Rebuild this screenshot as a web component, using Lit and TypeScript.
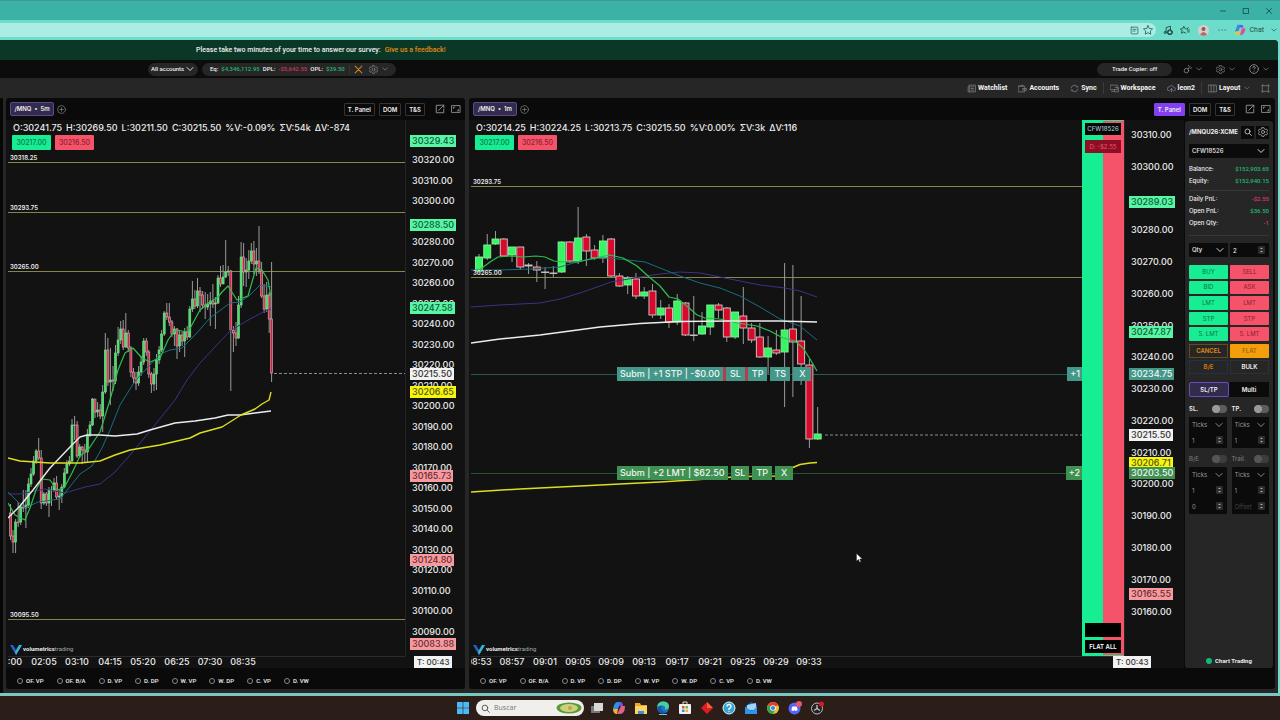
import { LitElement, html, svg, css } from "lit";
import { customElement, property } from "lit/decorators.js";

type Candle = [x: number, open: number, close: number, high: number, low: number];
type Mark = { price: number; text: string; tone: string };
type Order = { y: number; tone: string; qty: string; parts: string[]; ghost?: boolean };
interface ChartSpec {
  symbol: string;
  stats: string[];
  x0: number;
  width: number;
  refPrice: number;
  refY: number;
  perPoint: number;
  ticks: number[];
  marks: Mark[];
  levels: { price: string; y: number }[];
  times: { x: number; text: string }[];
  lines: { color: string; w: number; pts: string }[];
  candles: Candle[];
  bar: number;
  up: string;
  down: string;
  edge: string;
  last: { x: number; y: number };
}

const TOP = 120;
const HEIGHT = 536;

/* Closing values of the five minute bars: x, close, high, low. */
const FIVE: number[][] = [
  [10.5, 536, 504, 540], [13, 542, 530, 553], [15.6, 522, 519, 553], [18.2, 522, 502, 527], [20.7, 507, 505, 525], [23.3, 508, 490, 512],
  [25.9, 505, 490, 528], [28.4, 484, 478, 508], [31, 474, 468, 487], [33.6, 461, 456, 476], [36.1, 451, 449, 464],
  [38.7, 458, 438, 460], [41.2, 503, 450, 509], [43.8, 494, 492, 505], [46.4, 503, 492, 506], [49, 490, 487, 517],
  [51.5, 490, 486, 506], [54, 483, 478, 492], [56.6, 497, 476, 500], [59.2, 496, 490, 510], [61.8, 487, 484, 503],
  [64.3, 473, 468, 488], [66.9, 464, 460, 474], [69.4, 461, 456, 466], [72, 425, 419, 463], [74.6, 425, 416, 440],
  [77.1, 456, 421, 458], [79.7, 447, 444, 458], [82.2, 450, 446, 464], [84.8, 452, 444, 463], [87.4, 435, 429, 462],
  [90, 425, 421, 437], [92.5, 399, 398, 426], [95, 412, 399, 418], [97.6, 410, 402, 417], [100.2, 416, 404, 419],
  [102.7, 392, 385, 432], [105.3, 350, 333, 394], [107.9, 382, 338, 386], [110.4, 380, 348, 405], [113, 381, 366, 391],
  [115.5, 353, 345, 384], [118.1, 340, 327, 356], [120.7, 329, 321, 344], [123.2, 347, 320, 350], [125.8, 333, 313, 348],
  [128.3, 348, 330, 352], [130.9, 372, 346, 377], [133.5, 378, 368, 384], [136, 383, 372, 390], [138.6, 372, 366, 386],
  [141.1, 362, 356, 376], [143.7, 341, 338, 365], [146.3, 352, 338, 356], [148.8, 374, 350, 378], [151.4, 384, 372, 393],
  [154, 374, 368, 391], [156.5, 360, 354, 390], [159.1, 350, 346, 364], [161.6, 334, 330, 352], [164.2, 313, 311, 336],
  [166.8, 317, 303, 320], [169.3, 322, 303, 326], [171.9, 334, 320, 337], [174.4, 329, 326, 346], [177, 346, 328, 359],
  [179.6, 335, 330, 352], [182.1, 341, 332, 346], [184.7, 332, 328, 357], [187.2, 337, 326, 340], [189.8, 309, 306, 338],
  [192.4, 299, 281, 312], [194.9, 306, 290, 309], [197.5, 291, 278, 308], [200, 295, 287, 312], [202.6, 305, 291, 309],
  [205.2, 307, 292, 319], [207.7, 304, 294, 310], [210.3, 301, 292, 326], [212.9, 304, 284, 308], [215.4, 303, 297, 329],
  [218, 278, 275, 304], [220.5, 284, 266, 287], [223.1, 277, 265, 284], [225.7, 272, 240, 278], [228.2, 271, 266, 276],
  [230.8, 330, 270, 391], [233.4, 333, 326, 352], [236, 338, 322, 346], [238.5, 305, 296, 339], [241.1, 257, 242, 308],
  [243.6, 272, 243, 286], [246.2, 270, 258, 287], [248.8, 261, 250, 279], [251.3, 251, 243, 264], [253.9, 264, 241, 274],
  [256.4, 261, 248, 276], [259, 271, 226, 274], [261.6, 296, 262, 298], [264.1, 309, 284, 313], [266.7, 295, 282, 312],
  [269.2, 319, 292, 333], [271.6, 373, 262, 382],
];

const fiveMinute: Candle[] = FIVE.map(([x, c, h, l], i) => [x, i ? FIVE[i - 1][1] : 513, c, h, l]);

/* One minute bars: open, close, high, low, spaced evenly. */
const ONE: number[][] = [
  [271, 257, 254, 273], [258, 245, 234, 260], [244, 239, 231, 245], [239, 256, 238, 256], [255, 247, 247, 262],
  [247, 267, 247, 270], [265, 266, 263, 274], [267, 270, 261, 282], [272, 272, 267, 289], [273, 273, 266, 277],
  [272, 242, 241, 273], [242, 261, 241, 263], [261, 238, 207, 264], [237, 251, 234, 266], [250, 258, 245, 260],
  [258, 241, 235, 263], [239, 276, 238, 277], [276, 286, 273, 287], [285, 278, 276, 294], [279, 296, 273, 299],
  [296, 292, 287, 299], [291, 315, 284, 318], [315, 308, 300, 319], [308, 322, 304, 328], [322, 301, 294, 325],
  [303, 335, 302, 336], [335, 335, 296, 341], [334, 326, 312, 335], [327, 305, 305, 335], [305, 310, 303, 318],
  [308, 337, 307, 342], [337, 312, 312, 339], [316, 328, 287, 344], [328, 340, 323, 343], [337, 357, 323, 358],
  [357, 348, 336, 374], [350, 353, 330, 355], [352, 330, 263, 407], [329, 342, 265, 397], [341, 364, 296, 385],
  [365, 439, 359, 448], [439, 434, 407, 440],
];
const oneMinute: Candle[] = ONE.map(([o, c, h, l], i) => [479 + i * 8.26, o, c, h, l]);

const range = (from: number, to: number) =>
  Array.from({ length: (from - to) / 10 + 1 }, (_, i) => from - i * 10);

const left: ChartSpec = {
  symbol: "/MNQ  •  5m",
  stats: ["O:30241.75", "H:30269.50", "L:30211.50", "C:30215.50", "%V:-0.09%", "ΣV:54k", "ΔV:-874"],
  x0: 8,
  width: 397,
  refPrice: 30320,
  refY: 160,
  perPoint: 2.05,
  ticks: range(30320, 30090).filter((p) => p !== 30290),
  marks: [
    { price: 30329.43, text: "30329.43", tone: "mint" },
    { price: 30288.5, text: "30288.50", tone: "mint" },
    { price: 30247.58, text: "30247.58", tone: "mint" },
    { price: 30215.5, text: "30215.50", tone: "white" },
    { price: 30206.65, text: "30206.65", tone: "yellow" },
    { price: 30165.73, text: "30165.73", tone: "rose" },
    { price: 30124.8, text: "30124.80", tone: "rose" },
    { price: 30083.88, text: "30083.88", tone: "rose" },
  ],
  levels: [
    { price: "30318.25", y: 162.5 },
    { price: "30293.75", y: 212.5 },
    { price: "30265.00", y: 271.5 },
    { price: "30095.50", y: 619.5 },
  ],
  times: [
    { x: 15, text: ":00" }, { x: 44, text: "02:05" }, { x: 77, text: "03:10" }, { x: 110, text: "04:15" },
    { x: 143, text: "05:20" }, { x: 177, text: "06:25" }, { x: 210, text: "07:30" }, { x: 243, text: "08:35" },
  ],
  lines: [
    { color: "#3a3388", w: 1, pts: "8,494 20,494 45,489 65,493 85,487 100,484 115,472 130,455 150,431 175,400 187,380 200,363 215,347 230,331 250,319 265,311 271,309" },
    { color: "#16707f", w: 1, pts: "8,492 18,502 25,508 38,502 60,499 72,484 80,474 92,466 102,448 110,430 120,405 135,381 150,365 160,354 170,350 182,348 195,335 210,318 222,309 230,303 240,302 250,295 260,285 271,287" },
    { color: "#2fbf4b", w: 1.2, pts: "8,503 15,515 25,520 30,508 36,490 42,479 50,480 57,490 64,488 72,473 80,456 88,450 100,432 110,400 118,370 125,353 133,348 142,358 150,362 160,358 168,340 175,330 188,332 200,310 208,303 217,298 222,292 228,286 237,300 248,296 256,268 262,270 268,280 271,297" },
    { color: "#ececec", w: 1.4, pts: "8,518 20,506 33,490 50,468 70,447 80,437 87,435 100,435 115,436 137,434 150,430 175,423 195,421 215,418 228,415 240,415 255,413 271,411" },
    { color: "#dede20", w: 1.4, pts: "8,458 20,461 50,463 80,463 100,461 115,455 130,450 160,445 190,438 200,433 222,427 230,422 241,415 255,409 262,404 269,400 271,392" },
  ],
  candles: fiveMinute,
  bar: 2,
  up: "#3ee565",
  down: "#d81f3f",
  edge: "#cfb9ba",
  last: { x: 274, y: 373.5 },
};

const right: ChartSpec = {
  symbol: "/MNQ  •  1m",
  stats: ["O:30214.25", "H:30224.25", "L:30213.75", "C:30215.50", "%V:0.00%", "ΣV:3k", "ΔV:116"],
  x0: 471,
  width: 611,
  refPrice: 30310,
  refY: 135,
  perPoint: 3.177,
  ticks: range(30310, 30160).filter((p) => p !== 30290),
  marks: [
    { price: 30289.03, text: "30289.03", tone: "mint" },
    { price: 30247.87, text: "30247.87", tone: "mint" },
    { price: 30234.75, text: "30234.75", tone: "teal" },
    { price: 30215.5, text: "30215.50", tone: "white" },
    { price: 30206.71, text: "30206.71", tone: "yellow" },
    { price: 30203.5, text: "30203.50", tone: "green" },
    { price: 30165.55, text: "30165.55", tone: "rose" },
  ],
  levels: [
    { price: "30293.75", y: 186.5 },
    { price: "30265.00", y: 277.5 },
  ],
  times: ["08:53", "08:57", "09:01", "09:05", "09:09", "09:13", "09:17", "09:21", "09:25", "09:29", "09:33"].map(
    (text, i) => ({ x: 479 + i * 33, text })
  ),
  lines: [
    { color: "#3a3388", w: 1, pts: "471,307 500,305 540,303 560,299 580,293 600,286 611,282 640,277 660,274 680,272 700,273 730,279 760,285 785,288 800,291 817,297" },
    { color: "#16707f", w: 1, pts: "471,270 500,270 530,269 560,267 580,261 600,258 610,258 645,262 660,268 680,276 700,283 720,288 740,296 760,307 780,319 800,326 817,340" },
    { color: "#2fbf4b", w: 1.2, pts: "478,271 490,262 498,257 510,256 523,257 536,256 545,257 554,261 565,262 578,262 590,259 600,257 610,255 623,258 637,266 648,276 660,286 669,297 678,299 688,307 697,315 705,318 720,319 737,323 757,326 770,331 783,338 795,341 803,348 810,359 817,371" },
    { color: "#ececec", w: 1.5, pts: "471,343 500,339 540,335 570,331 600,327 640,323.5 680,321.5 730,321 780,321 817,322" },
    { color: "#dede20", w: 1.5, pts: "471,492 520,489 560,487 610,484.5 660,482 700,479.5 740,476.5 775,476 787,470 800,464.5 810,463 817,462.5" },
  ],
  candles: oneMinute,
  bar: 7,
  up: "#35f560",
  down: "#d80a2c",
  edge: "#cfcfcf",
  last: { x: 825, y: 435 },
};

const orders: Order[] = [
  { y: 374, tone: "teal", qty: "+1", parts: ["Subm | +1 STP | -$0.00", "SL", "TP", "TS", "X"], ghost: true },
  { y: 473, tone: "green", qty: "+2", parts: ["Subm | +2 LMT | $62.50", "SL", "TP", "X"] },
];

const profiles = ["OF. VP", "OF. B/A", "D. VP", "D. DP", "W. VP", "W. DP", "C. VP", "D. VW"];

const icon = (body: unknown, size = 10, w = 1.2) => html`<svg
  class="icon" width=${size} height=${size} viewBox="0 0 16 16" fill="none" stroke="currentColor"
  stroke-width=${w * 1.2} stroke-linecap="round" stroke-linejoin="round" aria-hidden="true">${body}</svg>`;

const chevron = (size = 8) => icon(svg`<path d="M2 5l6 6 6-6"/>`, size, 1.5);
const gear = (size = 10) => icon(svg`<path d="M6.500 1h3l.7 2 1.600.9 2.100-.5 1.500 2.600-1.400 1.500v1l1.400 1.500-1.500 2.600-2.100-.5-1.600.9-.7 2h-3l-.7-2-1.600-.9-2.100.5L.6 10l1.400-1.500v-1L.6 6l1.500-2.600 2.100.5L5.800 3z"/><circle cx="8" cy="8" r="2.500"/>`, size, 1);
const plus = icon(svg`<circle cx="8" cy="8" r="7"/><path d="M8 5v6M5 8h6"/>`, 9, 1);
const popout = icon(svg`<path d="M9 2H2v12h12V8M6 10l8-8M10.500 1.800H14.200V5.500"/>`, 10, 1.2);
const expand = icon(svg`<rect x="1.500" y="2.500" width="13" height="11"/><path d="M4 7V5h2M12 9v2h-2"/>`, 10, 1.1);
const stepper = html`<svg class="stepper" width="7" height="8" viewBox="0 0 7 8" aria-hidden="true"><rect width="7" height="8" rx="1" fill="#2c2c2c"/><path d="M2 3l1.500-1.500L5 3zM2 5l1.500 1.500L5 5z" fill="#aaa"/></svg>`;

const shared = css`
  * { box-sizing: border-box; }
  button, input, select { font: inherit; color: inherit; margin: 0; padding: 0; border: 0; background: none; min-width: 0; }
  button { flex: none; white-space: nowrap; }
  select { appearance: none; }
  input[type="number"] { appearance: textfield; }
  input::-webkit-inner-spin-button { display: none; }
  .icon { display: block; flex: none; }
`;

@customElement("trade-chart")
class TradeChart extends LitElement {
  @property({ attribute: false }) spec!: ChartSpec;
  @property({ type: Boolean }) trading = false;

  static styles = [shared, css`
    :host { display: grid; grid-template-columns: minmax(0, 1fr) auto 60px; grid-template-rows: minmax(0, 1fr) 12px; min-width: 0; min-height: 0; background: #121212; font-family: Inter, "Liberation Sans", sans-serif; color: #ececec; padding-left: 2px; }
    .plot { grid-column: 1; grid-row: 1; position: relative; overflow: hidden; min-width: 0; }
    .canvas { position: absolute; inset: 0; width: 100%; height: 100%; }
    .info { position: absolute; top: 1px; left: 4px; display: flex; flex-direction: column; gap: 1px; }
    .stats { display: flex; gap: 4px; padding-left: 1px; font-size: 9px; line-height: 13px; font-weight: 500; white-space: nowrap; }
    .quotes { display: flex; gap: 4px; }
    .quote { width: 39px; height: 15px; font-size: 7px; line-height: 15px; border-radius: 1px; text-align: center; }
    .bid { background: #17ed92; color: #0a7a4c; }
    .ask { background: #f4536a; color: #8c2232; }
    .level { position: absolute; left: 2px; font-size: 6px; line-height: 8px; font-weight: 600; transform: translateY(-100%); }
    .order { position: absolute; left: 23.9%; display: flex; gap: 3px; font-size: 9px; font-weight: 500; line-height: 14px; transform: translateY(-50%); white-space: nowrap; }
    .chip { height: 14px; padding: 0 3px; color: #f1f6f4; }
    .small { padding: 0 4px; }
    .small:last-child { padding: 0 6px; }
    .ghost .small { box-shadow: -3px 0 #b53b50, 3px 0 #b53b50; }
    .ghost .small ~ .small { box-shadow: none; }
    .qty { position: absolute; right: 0; font-size: 9px; font-weight: 500; line-height: 14px; padding: 0 2px 0 3px; transform: translateY(-50%); }
    .teal { background: #43988a; color: #f1f6f4; }
    .green { background: #3e9150; color: #f1f6f4; }
    .mint { background: #58f5a4; color: #0c5a38; }
    .white { background: #f2f2f2; color: #333; }
    .yellow { background: #f6f612; color: #55550a; }
    .rose { background: #f69a9f; color: #6b2a30; }
    .brand { position: absolute; left: 2px; bottom: 1px; display: flex; align-items: center; gap: 1px; font: 6px/12px Roboto, sans-serif; color: #9aa; }
    .brand b { color: #e4e8ee; }
    .cursor { position: absolute; left: 63%; top: 80.8%; }
    .ladder { grid-column: 2; grid-row: 1; width: 42px; display: flex; flex-direction: column; gap: 3px; padding: 2px; border: 1px solid #17ed92; border-right-color: #f4536a; background: linear-gradient(90deg, #17ed92 50%, #f4536a 50%); font-size: 6px; font-weight: 600; text-align: center; }
    .acct, .pnl { height: 12px; line-height: 12px; background: #050505; color: #a9c4d4; }
    .acct { font-weight: 500; }
    .pnl { background: #8d0f26; color: #f4536a; font-weight: 400; margin-top: 2px; height: 13px; line-height: 13px; }
    .blank { height: 14px; background: #000; margin-top: auto; }
    .flat { height: 13px; background: #000; color: #fff; }
    .axis { position: relative; grid-column: 3; grid-row: 1; font-size: 9px; border-left: 1px solid #242424; overflow: hidden; }
    .tick, .mark { position: absolute; left: 4px; line-height: 12px; transform: translateY(-50%); padding: 0 2px; white-space: nowrap; }
    .tick { font-weight: 500; }
    .times { position: relative; grid-column: 1 / 3; font-size: 9px; font-weight: 500; line-height: 9px; overflow: hidden; border-top: 1px solid #2b2b2b; }
    .time { position: absolute; transform: translateX(-50%); }
    .corner { grid-column: 3; display: flex; padding-left: 9px; font-size: 8px; line-height: 12px; }
    .timer { background: #f2f2f2; color: #333; padding: 0 3px; white-space: nowrap; }
    :host([trading]) .corner { padding: 0; margin-left: -11px; z-index: 1; }
  `];

  private pct(y: number) { return `top:${((y - TOP) / HEIGHT) * 100}%`; }
  private at(price: number) { return this.pct(this.spec.refY + (this.spec.refPrice - price) * this.spec.perPoint); }

  render() {
    const s = this.spec;
    const end = s.x0 + s.width;
    return html`
      <div class="plot">
        <svg class="canvas" viewBox="${s.x0} ${TOP} ${s.width} ${HEIGHT}" preserveAspectRatio="none" fill="none">
          ${s.levels.map((l) => svg`<path d="M${s.x0} ${l.y}H${end}" stroke="#85854c"/>`)}
          ${this.trading ? orders.map((o) => svg`<path d="M${s.x0} ${o.y + 0.5}H${end}" stroke=${o.tone === "teal" ? "#28584f" : "#25552f"}/>`) : ""}
          ${s.candles.map(([x, o, c, h, l]) => {
            const up = c < o;
            const doji = Math.abs(c - o) < 1;
            return svg`<path d="M${x} ${h}V${l}" stroke="#9b9b9b"/>
              <rect x=${x - s.bar / 2} y=${Math.min(o, c)} width=${s.bar} height=${doji ? 0.5 : Math.abs(c - o)}
                fill=${up ? s.up : s.down} stroke=${up && s.bar > 4 ? "#8af0a0" : up ? "#8fd79a" : s.edge} stroke-width=${s.bar > 4 ? 0.9 : 0.6}/>`;
          })}
          ${s.lines.map((l) => svg`<polyline points=${l.pts} stroke=${l.color} stroke-width=${l.w} stroke-linejoin="round"/>`)}
          <path d="M${s.last.x} ${s.last.y}H${end}" stroke="#8a8a8a" stroke-dasharray="3 2"/>
        </svg>
        <div class="info">
          <div class="stats">${s.stats.map((t) => html`<span>${t}</span>`)}</div>
          <div class="quotes"><button class="quote bid">30217.00</button><button class="quote ask">30216.50</button></div>
        </div>
        ${s.levels.map((l) => html`<span class="level" style=${this.pct(l.y - 1)}>${l.price}</span>`)}
        ${this.trading ? orders.map((o) => html`
          <div class="order ${o.ghost ? "ghost" : ""}" style=${this.pct(o.y)}>
            ${o.parts.map((p, i) => i === 0 ? html`<span class="chip ${o.tone}">${p}</span>` : html`<button class="chip small ${o.tone}">${p}</button>`)}
          </div>
          <span class="qty ${o.tone}" style=${this.pct(o.y)}>${o.qty}</span>`) : ""}
        <div class="brand">
          <svg width="12" height="11" viewBox="0 0 12 11"><path d="M0 1h3l3 5 3-5h3L6 11z" fill="#2463c9"/><path d="M9 1h3L6 11 5 8z" fill="#35b6c9"/></svg>
          <span><b>volumetrics</b>trading</span>
        </div>
        ${this.trading ? html`<svg class="cursor" width="7" height="10" viewBox="0 0 7 10"><path d="M.5.500v7.500l2-1.500 1.200 2.800 1.200-.5-1.200-2.700h2.600z" fill="#fff" stroke="#222" stroke-width=".4"/></svg>` : ""}
      </div>
      ${this.trading ? html`<div class="ladder">
        <div class="acct">CFW18526</div><div class="pnl">D: -$2.55</div>
        <div class="blank"></div><button class="flat">FLAT ALL</button>
      </div>` : ""}
      <div class="axis">
        ${s.ticks.map((p) => html`<span class="tick" style=${this.at(p)}>${p.toFixed(2)}</span>`)}
        ${s.marks.map((m) => html`<span class="mark ${m.tone}" style=${this.at(m.price)}>${m.text}</span>`)}
      </div>
      <div class="times">${s.times.map((t) => html`<span class="time" style="left:${((t.x - s.x0) / (s.width + (this.trading ? 42 : 0))) * 100}%">${t.text}</span>`)}</div>
      <div class="corner"><span class="timer">T: 00:43</span></div>`;
  }
}

@customElement("order-panel")
class OrderPanel extends LitElement {
  static styles = [shared, css`
    :host { display: flex; flex-direction: column; background: #262626; color: #eee; border-radius: 3px; padding: 4px 4px 0; font: 500 6px/12px Inter, "Liberation Sans", sans-serif; margin-top: 1px; min-width: 0; }
    .head { display: flex; align-items: center; gap: 2px; height: 14px; }
    .name { flex: 1; white-space: nowrap; font-weight: 700; }
    .tool { width: 13px; height: 13px; background: #0a0a0a; display: grid; place-items: center; color: #bbb; flex: none; }
    .field { position: relative; display: flex; align-items: center; background: #0b0b0b; height: 14px; border-radius: 1px; min-width: 0; }
    .field select, .field input { flex: 1; width: 100%; height: 100%; padding-left: 3px; outline: 0; }
    .field .icon { position: absolute; right: 4px; pointer-events: none; }
    .stepper { position: absolute; right: 4px; pointer-events: none; }
    .account { margin-top: 5px; }
    .facts { display: flex; flex-direction: column; margin: 5px 0 0; padding-bottom: 3px; border-bottom: 1px solid #383838; }
    .facts.last { margin-top: 2px; padding-bottom: 6px; }
    .fact { display: flex; justify-content: space-between; }
    .gain, .loss { font-family: Roboto, sans-serif; }
    .gain { color: #20b872; }
    .loss { color: #d83a60; }
    .pair { display: grid; grid-template-columns: 1fr 1fr; gap: 2px; }
    .size { margin-top: 7px; }
    .trade { height: 76px; grid-auto-rows: 1fr; margin-top: 8px; }
    .buy, .sell { border-radius: 1px; font-weight: 400; }
    .buy { background: #17ed92; color: #0b7448; }
    .sell { background: #f4536a; color: #8c2030; }
    .exit { margin-top: 3px; grid-auto-rows: 14px; }
    .cancel { border: 1px solid #6a4818; color: #e08a1c; font-weight: 600; }
    .flatten { background: #f59e0b; color: #94600a; border-radius: 1px; }
    .even { border: 1px solid #1d3346; color: #d07b1c; font-weight: 600; }
    .bulk { border: 1px solid #303030; font-weight: 600; }
    .mode { margin-top: 8px; grid-auto-rows: 15px; gap: 0; font-weight: 600; }
    .on { background: #322b4c; border: 1px solid #6a4bc0; border-radius: 2px; }
    .off { background: #0b0b0b; }
    .brackets { display: grid; grid-template-columns: 1fr 1fr; column-gap: 5px; margin-top: 6px; }
    .dim { color: #777; margin-top: 5px; }
    .toggle { display: flex; align-items: center; justify-content: space-between; height: 12px; font-weight: 600; }
    .dim .toggle { font-weight: 500; }
    .toggle input { appearance: none; width: 15px; height: 8px; border-radius: 4px; background: radial-gradient(circle at 4px 4px, #999 4px, #5c5c5c 4px); }
    .dim .toggle input { background: radial-gradient(circle at 4px 4px, #555 4px, #3c3c3c 4px); }
    .box { background: #0b0b0b; border-radius: 1px; margin-top: 2px; color: #999; font-weight: 400; }
    .box .field { height: 15px; }
    .box .field + .field { height: 16px; }
    .box ::placeholder { color: #444; }
    .status { margin-top: auto; height: 14px; display: flex; justify-content: center; align-items: center; gap: 3px; font: 700 6px/12px Roboto, sans-serif; }
    .dot { width: 6px; height: 6px; border-radius: 50%; background: #16b775; }
  `];

  private select(label: string, text: string) {
    return html`<label class="field"><select aria-label=${label}><option>${text}</option></select>${chevron(8)}</label>`;
  }
  private number(label: string, value: string, placeholder = "") {
    return html`<label class="field"><input type="number" aria-label=${label} .value=${value} placeholder=${placeholder} />${stepper}</label>`;
  }
  private bracket(name: string, rows: [string, string][]) {
    return html`<div>
      <label class="toggle">${name}<input type="checkbox" /></label>
      <div class="box">${this.select(`${name} unit`, "Ticks")}${rows.map(([v, p]) => this.number(`${name} value`, v, p))}</div>
    </div>`;
  }

  render() {
    return html`
      <div class="head"><span class="name">/MNQU26:XCME</span>
        <button class="tool" aria-label="Search">${icon(svg`<circle cx="7" cy="7" r="5"/><path d="M11 11l4 4"/>`, 8, 1.6)}</button>
        <button class="tool" aria-label="Settings">${gear(10)}</button></div>
      <label class="field account"><select aria-label="Account"><option>CFW18526</option></select>${chevron(8)}</label>
      <div class="facts">
        <div class="fact"><span>Balance:</span><span class="gain">$152,903.65</span></div>
        <div class="fact"><span>Equity:</span><span class="gain">$152,940.15</span></div>
      </div>
      <div class="facts last">
        <div class="fact"><span>Daily PnL:</span><span class="loss">-$2.55</span></div>
        <div class="fact"><span>Open PnL:</span><span class="gain">$36.50</span></div>
        <div class="fact"><span>Open Qty:</span><span class="loss">-1</span></div>
      </div>
      <div class="pair size">${this.select("Quantity type", "Qty")}${this.number("Quantity", "2")}</div>
      <div class="pair trade">
        ${[["BUY", "SELL"], ["BID", "ASK"], ["LMT", "LMT"], ["STP", "STP"], ["S. LMT", "S. LMT"]].map(
          ([b, s]) => html`<button class="buy">${b}</button><button class="sell">${s}</button>`
        )}
      </div>
      <div class="pair exit">
        <button class="cancel">CANCEL</button><button class="flatten">FLAT</button>
        <button class="even">B/E</button><button class="bulk">BULK</button>
      </div>
      <div class="pair mode"><button class="on">SL/TP</button><button class="off">Multi</button></div>
      <div class="brackets">${this.bracket("SL.", [["1", ""]])}${this.bracket("TP.", [["1", ""]])}</div>
      <div class="brackets dim">${this.bracket("B/E", [["1", ""], ["0", ""]])}${this.bracket("Trail.", [["1", ""], ["", "Offset"]])}</div>
      <div class="status"><span class="dot"></span>Chart Trading</div>`;
  }
}

@customElement("app-root")
class AppRoot extends LitElement {
  static styles = [shared, css`
    :host { display: flex; flex-direction: column; min-height: 100vh; background: #2b1d18; color: #eee; font: 500 7px/12px Roboto, "Liberation Sans", sans-serif; }
    .window { flex: 1; display: flex; flex-direction: column; background: #6edccb; border-bottom: 3px solid #78c8bf; }
    .title { height: 20px; background: #3cb1a6; border-top: 1px solid #3f9b8f; display: flex; justify-content: flex-end; align-items: center; gap: 15px; padding-right: 7px; color: #123f3b; }
    .address { height: 20px; display: flex; align-items: center; gap: 7px; color: #1c4f4a; padding-right: 3px; font-weight: 400; }
    .url { flex: 1; height: 14px; background: #abede5; border-radius: 0 7px 7px 0; display: flex; justify-content: flex-end; align-items: center; gap: 4px; padding-right: 3px; }
    .avatar { margin: 0 1px; }
    .chat { display: flex; align-items: center; gap: 3px; }
    .chat .icon + .icon { margin-left: 4px; }
    .page { flex: 1; display: flex; flex-direction: column; margin-right: 2px; border-radius: 0 4px 0 0; overflow: hidden; background: #262626; }
    .survey { height: 20px; background: #0b3826; display: flex; align-items: center; gap: 4px; padding-left: 196px; }
    .survey a { color: #e08a14; text-decoration: none; }
    .top { height: 18px; background: #0c0c0c; display: flex; align-items: center; gap: 4px; padding: 0 9px 0 148px; font-size: 6px; }
    .pill { height: 13px; border-radius: 7px; background: #262626; display: flex; align-items: center; }
    .accounts { width: 50px; justify-content: space-between; padding: 0 4px 0 3px; }
    .accounts select { flex: 1; }
    .totals { width: 194px; padding: 0 8px; gap: 3px; }
    .gain { color: #1fb870; }
    .loss { color: #d2345c; }
    .shut { padding-left: 4px; border-left: 1px solid #333; margin-left: 1px; }
    .shut .icon { color: #d0821f; }
    .muted { color: #8d8d8d; display: flex; align-items: center; gap: 4px; }
    .totals .muted { margin-left: 3px; }
    .copier { width: 75px; justify-content: center; margin-left: auto; }
    .menus { display: flex; gap: 14px; margin-left: 7px; }
    .toolbar { height: 20px; display: flex; justify-content: flex-end; align-items: center; padding-right: 8px; gap: 11px; color: #f4f4f4; font-weight: 700; }
    .action { display: flex; align-items: center; gap: 2px; }
    .action .icon { color: #7b7b7b; }
    .rule { border-left: 1px solid #3a3a3a; padding-left: 6px; margin-left: -5px; }
    .main { flex: 1; display: grid; grid-template-columns: minmax(0, 459fr) minmax(0, 806fr); gap: 4px; padding: 0 3px 4px 3px; border-left: 3px solid #070707; }
    .panel { background: #0a0a0a; border-radius: 3px; display: grid; grid-template-rows: 22px minmax(0, 1fr) 21px; overflow: hidden; }
    .bar { display: flex; align-items: center; gap: 4px; padding: 0 4px; font: 600 6px/12px Inter, sans-serif; }
    .tab { height: 14px; width: 44px; white-space: pre; background: #322b4c; border: 1px solid #5d4894; border-radius: 2px; }
    .add { color: #888; margin-right: auto; margin-left: -1px; }
    .key { height: 13px; padding: 0 3px; border: 1px solid #333; border-radius: 1px; background: #0a0a0a; }
    .active { background: #8440f0; border-color: #8440f0; }
    .tool { color: #999; margin-left: 2px; }
    .key + .tool { margin-left: 6px; }
    .body { display: grid; grid-template-columns: minmax(0, 1fr); }
    .split { grid-template-columns: minmax(0, 1fr) 88px; gap: 1px; padding-right: 2px; }
    .profiles { display: flex; align-items: center; padding-left: 11px; padding-top: 4px; gap: 13px; font-size: 6px; }
    .profile { display: flex; align-items: center; gap: 3px; }
    .profile input { appearance: none; width: 6px; height: 6px; border: 1px solid #888; border-radius: 50%; }
    .taskbar { height: 24px; display: flex; align-items: center; justify-content: center; gap: 8px; }
    .task { width: 14px; height: 14px; display: block; }
    .find { width: 108px; margin: 0 -2px; height: 16px; border-radius: 8px; background: #f1efec; color: #555; display: flex; align-items: center; gap: 4px; padding: 0 2px 0 5px; font: 7px/12px "Open Sans", sans-serif; }
    .find input { flex: 1; outline: 0; }
    .find ::placeholder { color: #777; }
  `];

  private header(spec: ChartSpec, active: boolean) {
    return html`<div class="bar">
      <button class="tab">${spec.symbol}</button><button class="add" aria-label="Add tab">${plus}</button>
      <button class="key ${active ? "active" : ""}">T. Panel</button><button class="key">DOM</button><button class="key">T&amp;S</button>
      <button class="tool" aria-label="Pop out">${popout}</button><button class="tool" aria-label="Expand">${expand}</button>
    </div>`;
  }
  private footer() {
    return html`<div class="profiles">${profiles.map((p) => html`<label class="profile"><input type="checkbox" />${p}</label>`)}</div>`;
  }
  private task(name: string, body: unknown) {
    return html`<button class="task" aria-label=${name}><svg class="icon" width="14" height="14" viewBox="0 0 14 14">${body}</svg></button>`;
  }

  render() {
    return html`
      <div class="window">
        <div class="title">
          ${icon(svg`<path d="M3 8h10"/>`, 8)}${icon(svg`<rect x="3" y="3" width="10" height="10"/>`, 8)}${icon(svg`<path d="M3 3l10 10M13 3L3 13"/>`, 8)}
        </div>
        <div class="address">
          <div class="url">${icon(svg`<rect x="2" y="2" width="12" height="12" rx="1"/><path d="M5 6h6M5 9h4"/>`, 9, 1)}${icon(svg`<path d="M8 1l2.200 4.500 5 .7-3.600 3.500.8 5L8 12.300 3.600 14.700l.8-5L.8 6.200l5-.7z"/>`, 10, 1)}</div>
          ${icon(svg`<path d="M5 12V4l7-2v5"/><circle cx="3.500" cy="12" r="1.800"/><circle cx="11" cy="11.500" r="4" fill="#1c2f30"/><path d="M11 9.500v4M9 11.500h4" stroke="#bff"/>`, 10)}
          ${icon(svg`<path d="M10 6.200L8 5.800 6 2 4.500 5.800.8 6.300l2.400 2.900-.7 4L6 11.200l3 1.800M12 8h3M12 11h3M13 4l-1.500 3"/>`, 10)}
          <svg class="icon avatar" width="11" height="11" viewBox="0 0 11 11"><circle cx="5.500" cy="5.500" r="5.500" fill="#d7cfc9"/><circle cx="5.500" cy="4" r="2" fill="#8d5a54"/><path d="M2 9.500q3.500-5 7 0-3.500 2.500-7 0" fill="#b26a64"/></svg>
          ${icon(svg`<path d="M3 8h.1M8 8h.1M13 8h.1"/>`, 10, 1.6)}
          <div class="chat"><svg class="icon" width="12" height="12" viewBox="0 0 14 14"><path d="M4 1h4l-3 8H1z" fill="#2e8fe8"/><path d="M8 1q3 0 3 3H6z" fill="#7c4be0"/><path d="M1 9q0 4 4 4l2-5z" fill="#f2c12e"/><path d="M9 5h4q1 2-1 5-1 3-5 3z" fill="#e0509a"/></svg>Chat${chevron(6)}</div>
        </div>
        <div class="page">
          <div class="survey"><span>Please take two minutes of your time to answer our survey:</span><a href="#">Give us a feedback!</a></div>
          <div class="top">
            <label class="pill accounts"><select aria-label="Accounts"><option>All accounts</option></select>${chevron(8)}</label>
            <div class="pill totals">
              <span>Eq:</span><span class="gain">$4,346,112.95</span><span>DPL:</span><span class="loss">-$5,642.55</span><span>OPL:</span><span class="gain">$39.50</span>
              <button class="shut" aria-label="Close all">${icon(svg`<path d="M2 2l12 12M14 2L2 14"/>`, 9, 1.5)}</button>
              <button class="muted" aria-label="Totals settings">${gear(9)}${chevron(6)}</button>
            </div>
            <button class="pill copier">Trade Copier: off</button>
            <div class="menus">
              <button class="muted" aria-label="Link">${icon(svg`<circle cx="6" cy="10" r="4"/><path d="M9 7l3-4M13 6l2-1M10 2V1"/>`, 9)}${chevron(6)}</button>
              <button class="muted" aria-label="Settings">${gear(9)}${chevron(6)}</button>
              <button class="muted" aria-label="Help">${icon(svg`<circle cx="8" cy="8" r="7"/><path d="M6 6q0-2 2-2t2 2q0 1.500-2 2.500M8 11.500v.1"/>`, 10)}${chevron(6)}</button>
            </div>
          </div>
          <div class="toolbar">
            <button class="action">${icon(svg`<path d="M4 2h11v12H2V5h2zM4 5v9M7 5h5M7 8h5M7 11h5"/>`, 9)}Watchlist</button>
            <button class="action">${icon(svg`<path d="M1 4h11v10H1zM1 4l8-2v2M9 8h6v3H9z"/>`, 9)}Accounts</button>
            <button class="action">${icon(svg`<path d="M2 7a6 6 0 0 1 11-2M14 9a6 6 0 0 1-11 2M11 5h3M2 11h3"/>`, 9)}Sync</button>
            <button class="action rule">${icon(svg`<path d="M1 2h12v8H1zM9 6h6v8H8V10M3 13h4"/>`, 9)}Workspace</button>
            <button class="action">${icon(svg`<path d="M5 12H4a3.500 3.500 0 0 1 0-7 4.500 4.500 0 0 1 8 1 3 3 0 0 1 0 6h-1M8 14V8M6 10l2-2 2 2"/>`, 9)}leon2</button>
            <button class="action rule">${icon(svg`<rect x="1" y="2" width="14" height="12"/><path d="M5.500 2v12M10.500 2v12"/>`, 9)}Layout&nbsp;${chevron(6)}</button>
            <button class="action" aria-label="Fullscreen">${icon(svg`<rect x="3" y="3" width="10" height="10"/><path d="M1 3h2V1M15 3h-2V1M1 13h2v2M15 13h-2v2"/>`, 9)}</button>
          </div>
          <div class="main">
            <section class="panel">${this.header(left, false)}<div class="body"><trade-chart .spec=${left}></trade-chart></div>${this.footer()}</section>
            <section class="panel">${this.header(right, true)}<div class="body split"><trade-chart .spec=${right} trading></trade-chart><order-panel></order-panel></div>${this.footer()}</section>
          </div>
        </div>
      </div>
      <div class="taskbar">
        ${this.task("Start", svg`<path d="M1 1h5.700v5.700H1zM7.300 1H13v5.700H7.300zM1 7.300h5.700V13H1zM7.300 7.300H13V13H7.300z" fill="#4cb9f2"/>`)}
        <label class="find">${icon(svg`<circle cx="7" cy="7" r="5"/><path d="M11 11l4 4"/>`, 9, 1.4)}<input type="search" aria-label="Buscar" placeholder="Buscar" />
          <svg class="icon" width="26" height="12" viewBox="0 0 26 12"><ellipse cx="13" cy="6" rx="12.500" ry="5.500" fill="#5a9a3c"/><ellipse cx="13" cy="6" rx="9" ry="4" fill="#c8d37c"/><circle cx="14" cy="6" r="2" fill="#d49a55"/></svg></label>
        ${this.task("Task view", svg`<rect x="1" y="5" width="9" height="7" fill="#777"/><rect x="4" y="2" width="9" height="8" fill="#d8d8d8"/>`)}
        ${this.task("Copilot", svg`<path d="M5 1h4L6 8H1q1-6 4-7" fill="#2e8fe8"/><path d="M8 1q3 0 3 4H7z" fill="#7c4be0"/><path d="M1 8h5l-1 5q-4 0-4-5" fill="#f2b12e"/><path d="M9 5h4q0 8-5 8H5z" fill="#e0608a"/>`)}
        ${this.task("Explorer", svg`<path d="M1 2h5l1 2h6v9H1z" fill="#e9a92b"/><path d="M1 5h12v8H1z" fill="#fbd464"/><path d="M4 10h6v3H4z" fill="#3a8ee0"/>`)}
        ${this.task("Edge", svg`<circle cx="7" cy="6.500" r="6" fill="#1b78c8"/><path d="M1 6Q2 .5 7 .5q6 0 6 5 0 3-4 3 1-4-3-4-4 0-5 1.500" fill="#49cf9c"/><path d="M5 7q0 4 6 4-6 3-9-1-1-5 4-5.500Q5 5 5 7" fill="#1558a8"/><path d="M3 13.500h8" stroke="#6cc5f0"/>`)}
        ${this.task("Store", svg`<rect x="1" y="3" width="12" height="10" rx="1" fill="#f1f1f1"/><path d="M5 3V1h4v2" fill="none" stroke="#ddd"/><path d="M4 5h2.500v2.500H4z" fill="#e5532d"/><path d="M7.500 5H10v2.500H7.500z" fill="#7ab82e"/><path d="M4 8.500h2.500V11H4z" fill="#2e8fe8"/><path d="M7.500 8.500H10V11H7.500z" fill="#f2b12e"/>`)}
        ${this.task("Trading", svg`<path d="M7 1l6 6-6 6-6-6z" fill="#e01b22"/><path d="M7 1l6 6H7z" fill="#f0653a"/>`)}
        ${this.task("Help", svg`<circle cx="7" cy="7" r="6" fill="#35a5d6" stroke="#e5f2f8"/><path d="M5 5.500q0-2 2-2t2 2Q9 7 7 7.600V9M7 10.300v.8" fill="none" stroke="#fff" stroke-width="1.300"/>`)}
        ${this.task("Mail", svg`<path d="M1 6l6-5 6 3v8H1z" fill="#1b62c0"/><path d="M3 4l9-2v7H3z" fill="#9fd6f5"/><path d="M1 6l7 4 5-4v7H1z" fill="#2f93ea"/>`)}
        ${this.task("Chrome", svg`<circle cx="7" cy="7" r="6" fill="#f2c12e"/><path d="M7 7L1.800 4A6 6 0 0 1 12.200 4z" fill="#e2402f"/><path d="M7 7l-5.200-3A6 6 0 0 0 7 13l2-4z" fill="#34a350"/><circle cx="7" cy="7" r="2.800" fill="#fff"/><circle cx="7" cy="7" r="2.100" fill="#3a7ee8"/>`)}
        ${this.task("Discord", svg`<circle cx="6.500" cy="7.500" r="6" fill="#5865f2"/><path d="M3.500 9.500q0-3 1-4h4q1 1 1 4l-2 .6-1-1-1 1z" fill="#fff"/><circle cx="11" cy="3" r="3" fill="#e85a6a"/>`)}
        ${this.task("OBS", svg`<circle cx="7" cy="7.500" r="5.500" fill="#222" stroke="#bbb"/><path d="M7 7.500V4M7 7.500l3 2M7 7.500l-3 2" stroke="#bbb" stroke-width="1.400"/><circle cx="11.500" cy="3" r="2.500" fill="#e0151f"/>`)}
      </div>`;
  }
}
